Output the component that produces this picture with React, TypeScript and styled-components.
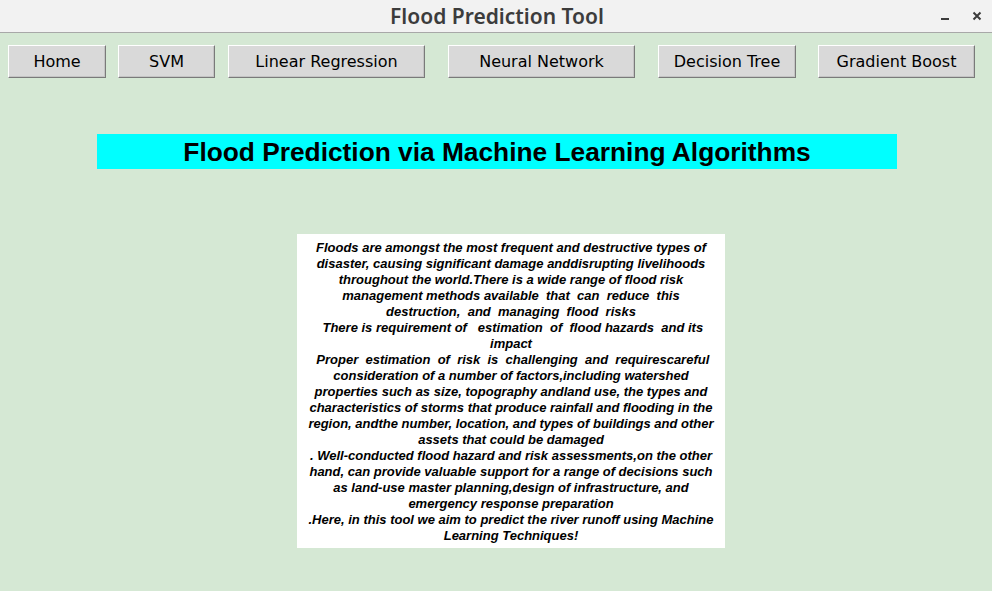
import React from 'react'
import styled, { createGlobalStyle } from 'styled-components'

const Global = createGlobalStyle`
  html, body {
    margin: 0;
    padding: 0;
    background: #d5e8d4;
  }
`

const Window = styled.div`
  width: 992px;
  height: 591px;
  display: flex;
  flex-direction: column;
  background: #d5e8d4;
  overflow: hidden;
`

const TitleBar = styled.div`
  height: 32px;
  flex-shrink: 0;
  position: relative;
  display: flex;
  align-items: center;
  justify-content: center;
  background: #f2f2f2;
  border-bottom: 1px solid #a8a8a8;
  font-family: 'Noto Sans', 'DejaVu Sans', sans-serif;
  font-size: 21px;
  font-weight: 600;
  color: #3c3c3c;
`

const TitleText = styled.span`
  margin-left: 2px;
  margin-top: -1px;
`

const Controls = styled.div`
  position: absolute;
  right: 10px;
  top: 0;
  height: 32px;
  display: flex;
  align-items: center;
  gap: 22px;
  color: #3c3c3c;
`

const Toolbar = styled.div`
  display: flex;
  padding: 12px 0 0 8px;
`

const Button = styled.button<{ $w: number; $gap: number }>`
  width: ${(p) => p.$w}px;
  height: 33px;
  margin-left: ${(p) => p.$gap}px;
  box-sizing: border-box;
  background: #d9d9d9;
  border: 1px solid;
  border-color: #ffffff #7a7a7a #7a7a7a #ffffff;
  box-shadow: inset -1px -1px 0 #c4c4c4;
  font-family: 'DejaVu Sans', sans-serif;
  font-size: 16px;
  color: #000;
  padding: 0;
  cursor: pointer;
`

const Heading = styled.h1`
  margin: 56px 0 0 97px;
  width: 800px;
  height: 35px;
  padding-top: 2px;
  box-sizing: border-box;
  background: #00ffff;
  display: flex;
  align-items: center;
  justify-content: center;
  font-family: 'Liberation Sans', Arial, sans-serif;
  font-weight: bold;
  font-size: 26.3px;
  color: #000;
`

const Info = styled.div`
  margin: 65px 0 0 297px;
  width: 428px;
  box-sizing: border-box;
  padding: 6px 0 4px;
  background: #ffffff;
  font-family: 'Liberation Sans', Arial, sans-serif;
  font-weight: bold;
  font-style: italic;
  font-size: 13px;
  line-height: 16px;
  text-align: center;
  color: #000;
`

const Line = styled.div`
  white-space: pre;
`

const buttons = [
  { label: 'Home', w: 98, gap: 0 },
  { label: 'SVM', w: 97, gap: 12 },
  { label: 'Linear Regression', w: 197, gap: 13 },
  { label: 'Neural Network', w: 187, gap: 23 },
  { label: 'Decision Tree', w: 138, gap: 23 },
  { label: 'Gradient Boost', w: 157, gap: 22 },
]

const lines = [
  'Floods are amongst the most frequent and destructive types of',
  'disaster, causing significant damage anddisrupting livelihoods',
  'throughout the world.There is a wide range of flood risk',
  'management methods available  that  can  reduce  this',
  'destruction,  and  managing  flood  risks',
  ' There is requirement of   estimation  of  flood hazards  and its',
  'impact',
  ' Proper  estimation  of  risk  is  challenging  and  requirescareful',
  'consideration of a number of factors,including watershed',
  'properties such as size, topography andland use, the types and',
  'characteristics of storms that produce rainfall and flooding in the',
  'region, andthe number, location, and types of buildings and other',
  'assets that could be damaged',
  '. Well-conducted flood hazard and risk assessments,on the other',
  'hand, can provide valuable support for a range of decisions such',
  'as land-use master planning,design of infrastructure, and',
  'emergency response preparation',
  '.Here, in this tool we aim to predict the river runoff using Machine',
  'Learning Techniques!',
]

function App() {
  return (
    <Window>
      <Global />
      <TitleBar>
        <TitleText>Flood Prediction Tool</TitleText>
        <Controls>
          <svg width="10" height="10" viewBox="0 0 10 10">
            <rect x="1" y="7" width="8" height="2" fill="#3c3c3c" />
          </svg>
          <svg width="10" height="10" viewBox="0 0 10 10">
            <path d="M1.5 1.5 L8.5 8.5 M8.5 1.5 L1.5 8.5" stroke="#3c3c3c" strokeWidth="2" />
          </svg>
        </Controls>
      </TitleBar>
      <Toolbar>
        {buttons.map((b) => (
          <Button key={b.label} $w={b.w} $gap={b.gap}>
            {b.label}
          </Button>
        ))}
      </Toolbar>
      <Heading>Flood Prediction via Machine Learning Algorithms</Heading>
      <Info>
        {lines.map((l, i) => (
          <Line key={i}>{l}</Line>
        ))}
      </Info>
    </Window>
  )
}

export default App
